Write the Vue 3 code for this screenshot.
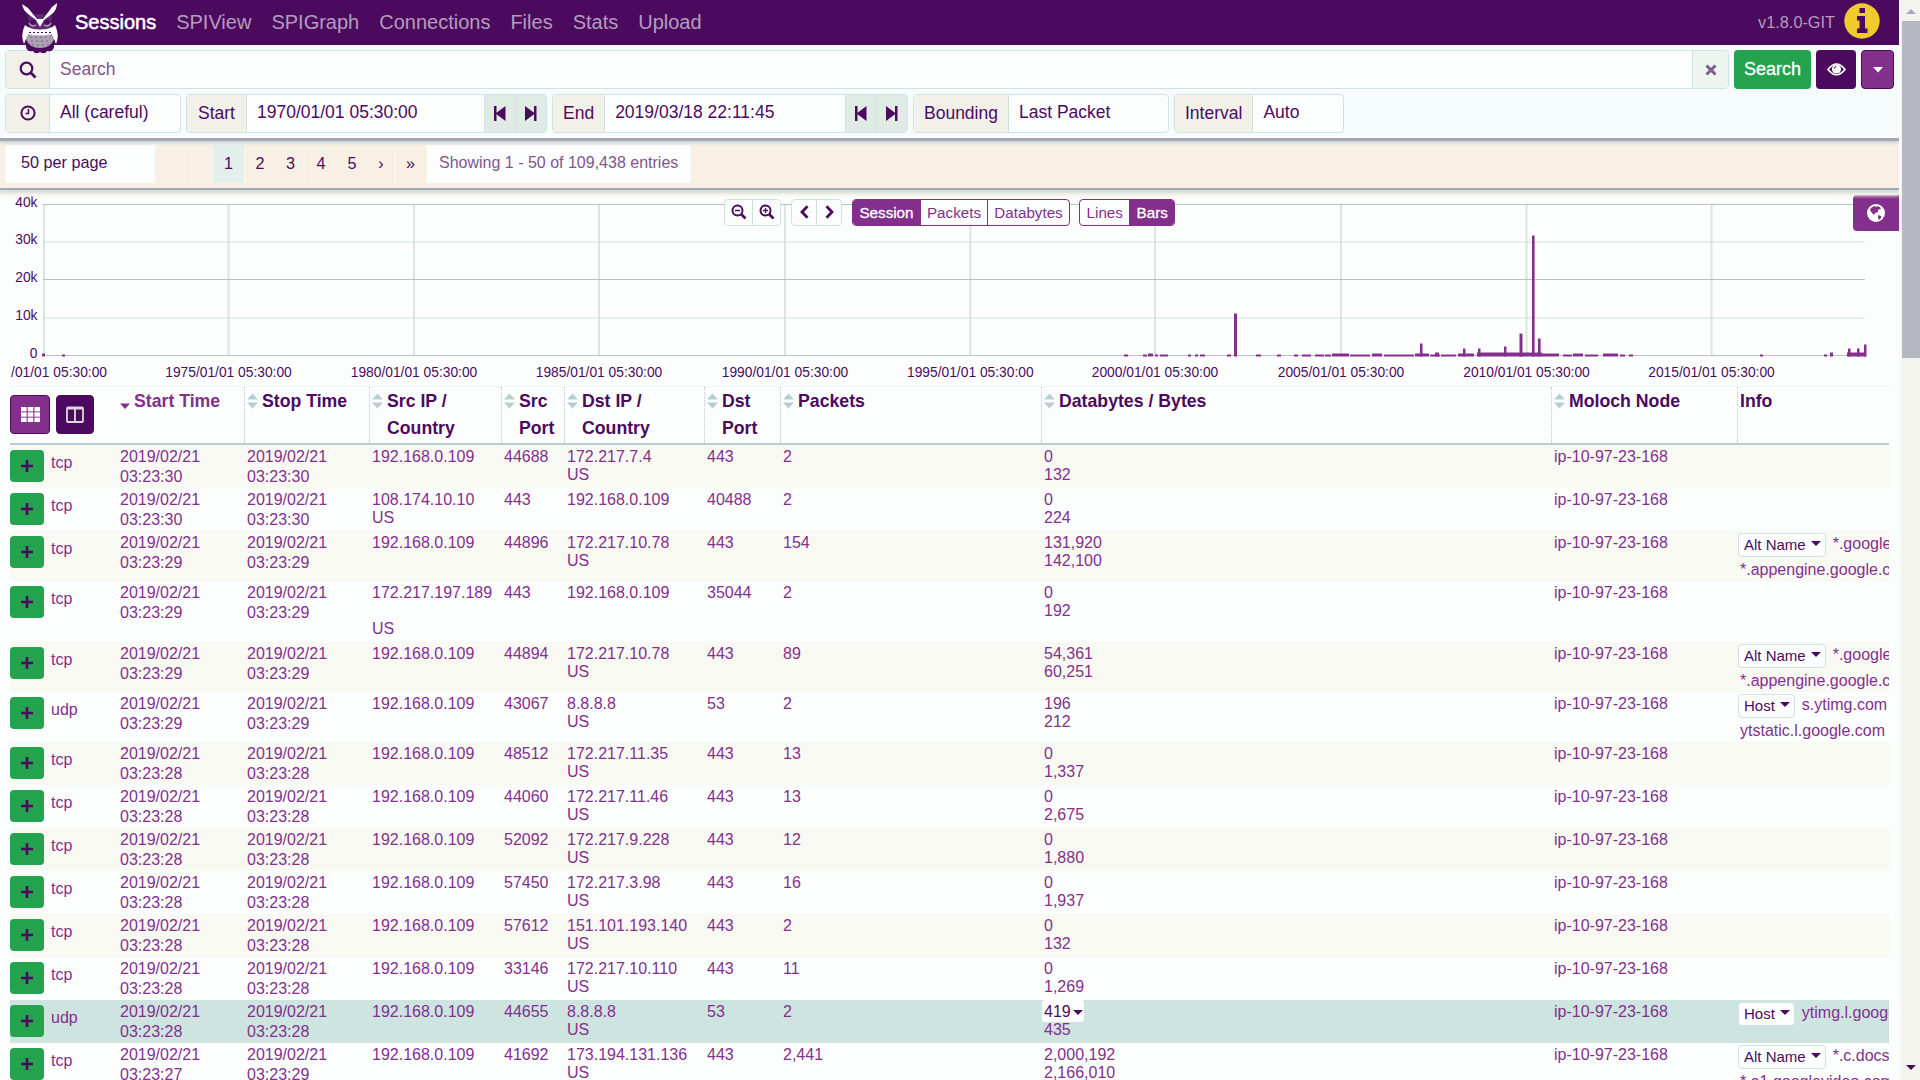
<script setup>
const nav = ['Sessions', 'SPIView', 'SPIGraph', 'Connections', 'Files', 'Stats', 'Upload']
const pages = [
  { t: '', w: 31 }, { t: '', w: 27 }, { t: '1', w: 32, on: true }, { t: '2', w: 31 }, { t: '3', w: 30 },
  { t: '4', w: 31 }, { t: '5', w: 31 }, { t: '›', w: 27 }, { t: '»', w: 32 },
]
const yTicks = [
  { t: '40k', y: 9.5 }, { t: '30k', y: 47 }, { t: '20k', y: 84.5 }, { t: '10k', y: 123 }, { t: '0', y: 160.5 },
]
const xTicks = [
  { t: '1970/01/01 05:30:00', x: 44 }, { t: '1975/01/01 05:30:00', x: 228.5 }, { t: '1980/01/01 05:30:00', x: 414 },
  { t: '1985/01/01 05:30:00', x: 599 }, { t: '1990/01/01 05:30:00', x: 785 }, { t: '1995/01/01 05:30:00', x: 970.3 },
  { t: '2000/01/01 05:30:00', x: 1155 }, { t: '2005/01/01 05:30:00', x: 1341 }, { t: '2010/01/01 05:30:00', x: 1526.5 },
  { t: '2015/01/01 05:30:00', x: 1711.5 },
]
// x, width, height of each histogram bar
const bars = [
  [42, 3, 3], [62, 3, 2], [1124, 4, 2], [1143, 4, 2], [1148, 5, 3], [1155, 3, 2], [1160, 8, 2], [1188, 3, 2], [1195, 3, 2], [1200, 5, 2], [1227, 4, 2],
  [1234, 3, 43], [1256, 5, 2], [1277, 4, 2], [1294, 4, 2], [1302, 9, 2], [1315, 9, 2], [1325, 6, 2], [1332, 17, 3], [1350, 20, 2],
  [1372, 10, 3], [1384, 30, 2], [1415, 14, 3], [1420, 2.5, 13], [1430, 10, 2], [1435, 4, 4], [1441, 15, 2], [1458, 16, 3], [1463, 2.5, 8],
  [1477, 65, 4], [1478, 2.5, 8], [1504, 2.5, 10], [1519.5, 3, 23], [1532, 2.6, 121], [1538, 2.6, 18], [1542, 17, 3], [1563, 9, 2],
  [1573, 10, 3], [1585, 13, 2], [1603, 15, 3], [1620, 5, 2], [1629, 4, 2], [1760, 3, 2], [1824, 3, 2], [1830, 3, 4],
  [1847, 19, 4], [1848, 2.5, 8], [1857, 2.5, 8], [1864, 2.5, 12],
]
const cols = [
  { t: ['Start Time'], sorted: true }, { t: ['Stop Time'] }, { t: ['Src IP /', 'Country'] }, { t: ['Src', 'Port'] },
  { t: ['Dst IP /', 'Country'] }, { t: ['Dst', 'Port'] }, { t: ['Packets'] }, { t: ['Databytes / Bytes'] },
  { t: ['Moloch Node'] }, { t: ['Info'], plain: true },
]
const rows = [
  { h: 43, p: 'tcp', a: '03:23:30', b: '03:23:30', s: '192.168.0.109', sp: '44688', d: '172.217.7.4', dc: 'US', dp: '443', k: '2', x: '0', y: '132' },
  { h: 43, p: 'tcp', a: '03:23:30', b: '03:23:30', s: '108.174.10.10', sc: 'US', sp: '443', d: '192.168.0.109', dp: '40488', k: '2', x: '0', y: '224' },
  { h: 50, p: 'tcp', a: '03:23:29', b: '03:23:29', s: '192.168.0.109', sp: '44896', d: '172.217.10.78', dc: 'US', dp: '443', k: '154', x: '131,920', y: '142,100', i: ['Alt Name', '*.google', '*.appengine.google.com'] },
  { h: 61, p: 'tcp', a: '03:23:29', b: '03:23:29', s: '172.217.197.189', sc: 'US', wrap: true, sp: '443', d: '192.168.0.109', dp: '35044', k: '2', x: '0', y: '192' },
  { h: 50, p: 'tcp', a: '03:23:29', b: '03:23:29', s: '192.168.0.109', sp: '44894', d: '172.217.10.78', dc: 'US', dp: '443', k: '89', x: '54,361', y: '60,251', i: ['Alt Name', '*.google', '*.appengine.google.com'] },
  { h: 50, p: 'udp', a: '03:23:29', b: '03:23:29', s: '192.168.0.109', sp: '43067', d: '8.8.8.8', dc: 'US', dp: '53', k: '2', x: '196', y: '212', i: ['Host', 's.ytimg.com', 'ytstatic.l.google.com'] },
  { h: 43, p: 'tcp', a: '03:23:28', b: '03:23:28', s: '192.168.0.109', sp: '48512', d: '172.217.11.35', dc: 'US', dp: '443', k: '13', x: '0', y: '1,337' },
  { h: 43, p: 'tcp', a: '03:23:28', b: '03:23:28', s: '192.168.0.109', sp: '44060', d: '172.217.11.46', dc: 'US', dp: '443', k: '13', x: '0', y: '2,675' },
  { h: 43, p: 'tcp', a: '03:23:28', b: '03:23:28', s: '192.168.0.109', sp: '52092', d: '172.217.9.228', dc: 'US', dp: '443', k: '12', x: '0', y: '1,880' },
  { h: 43, p: 'tcp', a: '03:23:28', b: '03:23:28', s: '192.168.0.109', sp: '57450', d: '172.217.3.98', dc: 'US', dp: '443', k: '16', x: '0', y: '1,937' },
  { h: 43, p: 'tcp', a: '03:23:28', b: '03:23:28', s: '192.168.0.109', sp: '57612', d: '151.101.193.140', dc: 'US', dp: '443', k: '2', x: '0', y: '132' },
  { h: 43, p: 'tcp', a: '03:23:28', b: '03:23:28', s: '192.168.0.109', sp: '33146', d: '172.217.10.110', dc: 'US', dp: '443', k: '11', x: '0', y: '1,269' },
  { h: 43, p: 'udp', hover: true, a: '03:23:28', b: '03:23:28', s: '192.168.0.109', sp: '44655', d: '8.8.8.8', dc: 'US', dp: '53', k: '2', x: '419', y: '435', i: ['Host', 'ytimg.l.google.com', ''] },
  { h: 50, plain: true, p: 'tcp', a: '03:23:27', b: '03:23:29', s: '192.168.0.109', sp: '41692', d: '173.194.131.136', dc: 'US', dp: '443', k: '2,441', x: '2,000,192', y: '2,166,010', i: ['Alt Name', '*.c.docs', '*.a1.googlevideo.com'] },
]
</script>

<template>
  <div class="app">
    <div class="main">
      <nav class="navbar">
        <svg class="owl" width="38" height="52" viewBox="0 0 38 52">
          <path d="M5 40 Q4 50 12 48 Q14 52 19 49 Q24 52 26 48 Q34 50 33 40Z" fill="#4c0a5f" />
          <path d="M5 24 L33 24 L33 36 Q30 45 19 45 Q8 45 5 36Z" fill="#ada0b3" />
          <path d="M7 13 Q19 9 31 13 L29 25 Q19 29 9 25Z" fill="#5f2a70" />
          <path d="M1 1 Q2 7 7 11 L15 17 19 24 23 17 31 11 Q36 7 36 0 L31 4 22 16 16 16 7 5Z" fill="#fcfefe" />
          <circle cx="12" cy="19" r="2.500" fill="#4c0a5f" /><circle cx="26" cy="19" r="2.500" fill="#4c0a5f" />
          <path d="M8 20a4.500 4.500 0 0 0 7 2M30 20a4.500 4.500 0 0 1-7 2" fill="none" stroke="#ada0b3" stroke-width="1.400" />
          <path d="M4 22 Q-1 32 3 41 L7 31 Q19 34 31 31 L35 41 Q39 32 34 22 L30 25 Q19 28 8 25Z" fill="#fcfefe" />
          <path d="M8 29.500 H31" stroke="#4c0a5f" stroke-width="1" stroke-dasharray="2 2" />
          <path d="M9 34 H30 M10 38 H29 M11 42 H28" stroke="#7d6290" stroke-width="1" stroke-dasharray="2 3" />
        </svg>
        <a v-for="(n, i) in nav" :key="n" :class="{ active: i === 0 }">{{ n }}</a>
        <span class="version">v1.8.0-GIT</span>
        <svg class="info-icon" width="36" height="36" viewBox="0 0 36 36">
          <circle cx="18" cy="18" r="17.7" fill="#f0cb2e" />
          <path d="M15.500 5h5.500v5h-5.500zM13 13h8v12.500h2.500v4.500H13v-4.500h2.500V17.500H13z" fill="#4c0a5f" />
        </svg>
      </nav>

      <section class="search-bar">
        <div class="line">
          <div class="group grow">
            <span class="addon icon">
              <svg width="18" height="18" viewBox="0 0 18 18" fill="none" stroke="#4c0a5f" stroke-width="2.200"><circle cx="7.500" cy="7.500" r="5.800" /><path d="M11.500 11.500l5 5" stroke-width="2.800" /></svg>
            </span>
            <span class="field placeholder">Search</span>
            <span class="addon clear">
              <svg width="12" height="12" viewBox="0 0 12 12" stroke="#776185" stroke-width="3"><path d="M1.500 1.500l9 9M10.500 1.500l-9 9" /></svg>
            </span>
          </div>
          <button class="btn green">Search</button>
          <button class="btn dark">
            <svg width="19" height="13" viewBox="0 0 19 13"><path d="M1 6.500Q9.500-4.500 18 6.500Q9.500 17 1 6.500z" fill="none" stroke="#fff" stroke-width="1.700" /><circle cx="9.500" cy="6" r="4.600" fill="#fff" /><path d="M7.200 5.800a2.400 2.400 0 0 1 2.200-2.400" fill="none" stroke="#4c0a5f" /></svg>
          </button>
          <button class="btn purple">
            <svg width="10" height="6" viewBox="0 0 10 6"><path d="M0 0h10L5 5.600z" fill="#fff" /></svg>
          </button>
        </div>
        <div class="line second">
          <div class="group g-range">
            <span class="addon icon">
              <svg width="16" height="16" viewBox="0 0 16 16" fill="none" stroke="#4c0a5f" stroke-width="2"><circle cx="8" cy="8" r="6.600" /><path d="M8.500 4v4.500H5.500" stroke-width="1.500" /></svg>
            </span>
            <span class="field">All (careful)</span>
          </div>
          <div v-for="g in [['Start', '1970/01/01 05:30:00', 'g-start'], ['End', '2019/03/18 22:11:45', 'g-end']]" :key="g[0]" class="group" :class="g[2]">
            <span class="addon">{{ g[0] }}</span>
            <span class="field">{{ g[1] }}</span>
            <span class="addon step"><svg width="12" height="15" viewBox="0 0 12 15" fill="#4c0a5f"><path d="M0 0h2.500v6.800L11.500 0v15L2.500 8.200V15H0z" /></svg></span>
            <span class="addon step"><svg width="12" height="15" viewBox="0 0 12 15" fill="#4c0a5f"><path d="M11.500 0H9v6.800L0 0v15l9-6.800V15h2.500z" /></svg></span>
          </div>
          <div class="group g-bound"><span class="addon">Bounding</span><span class="field">Last Packet</span></div>
          <div class="group g-int"><span class="addon">Interval</span><span class="field">Auto</span></div>
        </div>
      </section>

      <section class="paging">
        <span class="per-page">50 per page</span>
        <span v-for="(p, i) in pages" :key="i" class="page" :class="{ on: p.on }" :style="{ width: p.w + 'px' }">{{ p.t }}</span>
        <span class="showing">Showing 1 - 50 of 109,438 entries</span>
      </section>

      <section class="chart">
        <svg width="1899" height="191" viewBox="0 0 1899 191">
          <line v-for="t in xTicks" :key="t.x" :x1="t.x" :x2="t.x" y1="9" y2="161" stroke="#dbe6dc" stroke-width="2" />
          <line v-for="(t, i) in yTicks" :key="t.y" x1="43" x2="1865" :y1="t.y" :y2="t.y" :stroke="i % 2 ? '#cde4e1' : '#bfbcc8'" stroke-width="1" />
          <rect v-for="(b, i) in bars" :key="i" :x="b[0]" :y="161.500 - b[2]" :width="b[1]" :height="b[2]" fill="#83308c" />
          <text v-for="t in yTicks" :key="t.t" x="37.500" :y="t.y + 2.300" text-anchor="end">{{ t.t }}</text>
          <text v-for="(t, i) in xTicks" :key="t.t" :x="i ? t.x : 107" y="181.500" :text-anchor="i ? 'middle' : 'end'">{{ i ? t.t : '/01/01 05:30:00' }}</text>
        </svg>
        <div class="tools">
          <div class="tool-group light">
            <span style="width: 27px"><svg width="16" height="16" viewBox="0 0 16 16" fill="none" stroke="#4c0a5f" stroke-width="2"><circle cx="6.500" cy="6.500" r="5" /><path d="M10 10l4.500 4.500" stroke-width="2.600" /><path d="M4 6.500h5" stroke-width="1.300" /></svg></span>
            <span style="width: 28px"><svg width="16" height="16" viewBox="0 0 16 16" fill="none" stroke="#4c0a5f" stroke-width="2"><circle cx="6.500" cy="6.500" r="5" /><path d="M10 10l4.500 4.500" stroke-width="2.600" /><path d="M4 6.500h5M6.500 4v5" stroke-width="1.300" /></svg></span>
          </div>
          <div class="tool-group light arrows">
            <span style="width: 24px"><svg width="9" height="14" viewBox="0 0 9 14" fill="none" stroke="#4c0a5f" stroke-width="2.800"><path d="M7.500 1.200L2 7l5.500 5.800" /></svg></span>
            <span style="width: 25px"><svg width="9" height="14" viewBox="0 0 9 14" fill="none" stroke="#4c0a5f" stroke-width="2.800"><path d="M1.500 1.200L7 7l-5.500 5.800" /></svg></span>
          </div>
          <div class="tool-group solid kinds"><span class="on" style="width: 67px">Session</span><span style="width: 67px">Packets</span><span style="width: 82px">Databytes</span></div>
          <div class="tool-group solid styles"><span style="width: 50px">Lines</span><span class="on" style="width: 45px">Bars</span></div>
        </div>
        <div class="globe">
          <svg width="18" height="18" viewBox="0 0 18 18"><circle cx="9" cy="9" r="9" fill="#fff" /><path d="M4 4l3-2 3 1 2 0 1 2-2 1 0 2-3 1-1 2-2-2-2-3zM10 2l3 1 1 2-3 0zM11 11l3 1 0 2-2 2-1-2z" fill="#83308c" /></svg>
        </div>
      </section>

      <section class="table">
        <div class="thead grid">
          <div class="head-buttons">
            <span class="hb light"><svg width="19" height="15" viewBox="0 0 19 15" fill="#fff"><template v-for="r in 3" :key="r"><rect v-for="c in 3" :key="c" :x="(c - 1) * 6.700" :y="(r - 1) * 5.300" width="5.600" height="4.400" /></template></svg></span>
            <span class="hb"><svg width="18" height="17" viewBox="0 0 18 17" fill="none" stroke="#dcd9e2" stroke-width="1.800"><rect x="1" y="1.500" width="16" height="14.500" rx="1" /><path d="M9 2v14M1 2.500h16" /></svg></span>
          </div>
          <div v-for="c in cols" :key="c.t[0]" class="th" :class="{ sorted: c.sorted, plain: c.plain }">
            <svg v-if="c.sorted" class="sort" width="10" height="18" viewBox="0 0 10 18"><path d="M0 10.500h10L5 16z" fill="#83308c" /></svg>
            <svg v-else-if="!c.plain" class="sort" width="11" height="18" viewBox="0 0 11 18" fill="#b9cdcf"><path d="M0 7.500h11L5.500 1.500zM0 10.500h11L5.500 16.500z" /></svg>
            <span><template v-for="l in c.t" :key="l">{{ l }}<br></template></span>
          </div>
        </div>
        <div v-for="(r, i) in rows" :key="i" class="row grid" :class="{ odd: i % 2 === 0, hover: r.hover }" :style="{ height: r.h + 'px' }">
          <div class="first"><span class="plus"><svg width="12" height="12" viewBox="0 0 12 12"><path d="M6 0v12M0 6h12" stroke="#4c0a5f" stroke-width="2.600" /></svg></span><span class="proto">{{ r.p }}</span></div>
          <div class="date">2019/02/21<br>{{ r.a }}</div>
          <div class="date">2019/02/21<br>{{ r.b }}</div>
          <div>{{ r.s }}<br><br v-if="r.wrap">{{ r.sc }}</div>
          <div>{{ r.sp }}</div>
          <div>{{ r.d }}<br>{{ r.dc }}</div>
          <div>{{ r.dp }}</div>
          <div>{{ r.k }}</div>
          <div><span v-if="r.hover" class="value-menu">{{ r.x }}<i class="caret"></i></span><template v-else>{{ r.x }}</template><br>{{ r.y }}</div>
          <div>ip-10-97-23-168</div>
          <div class="info">
            <template v-if="r.i">
              <div class="info-line"><span class="tag">{{ r.i[0] }}<i class="caret"></i></span>{{ r.i[1] }}</div>
              <div class="info-second">{{ r.i[2] }}</div>
            </template>
          </div>
        </div>
      </section>
    </div>

    <aside class="scrollbar">
      <i class="up"></i>
      <div class="thumb"></div>
      <i class="down"></i>
    </aside>
  </div>
</template>

<style>
body { margin: 0; overflow: hidden; }
</style>

<style scoped>
* { box-sizing: border-box; }
.app { display: flex; width: 1920px; height: 1080px; overflow: hidden; background: #fcfefe; font-family: "Liberation Sans", Arial, sans-serif; color: #4c0a5f; }
.main { width: 1899px; height: 1080px; overflow: hidden; }
svg { display: block; flex: none; }

.navbar { display: flex; align-items: center; height: 45px; padding-left: 22px; background: #4c0a5f; position: relative; z-index: 5; font-size: 20px; color: #b29dbd; }
.owl { align-self: flex-start; margin: 3px 16px 0 -1px; }
.navbar a { margin-right: 20px; line-height: 47px; }
.navbar a.active { color: #fff; -webkit-text-stroke: 0.5px #fff; }
.version { margin-left: auto; font-size: 16.300px; }
.info-icon { margin: -4px 19px 0 9px; }

.search-bar { height: 93px; padding: 5px 5px 0; background: #f6fcfb; position: relative; z-index: 4; box-shadow: 0 3px 0 #ada3b5, 0 5px 3px #bcd5d5; font-size: 17.500px; }
.line { display: flex; height: 39px; }
.line.second { margin-top: 5px; }
.line.second .field, .line.second .addon { line-height: 35px; padding-bottom: 1px; }
.group { display: flex; height: 39px; border: 1px solid #cde4e1; border-radius: 4px; overflow: hidden; background: #fcfefe; margin-right: 6px; }
.grow { flex: 1; margin-right: 5px; }
.addon { display: flex; align-items: center; justify-content: center; padding: 0 10px; background: #f1f1ea; border-right: 1px solid #cde4e1; }
.addon.icon { width: 44px; padding: 0; }
.field { flex: 1; padding-left: 10px; line-height: 36px; white-space: nowrap; }
.placeholder { color: #83558f; }
.addon.clear { width: 36px; padding: 0; border-right: 0; border-left: 1px solid #cde4e1; background: #eef5f1; }
.addon.step { width: 31px; padding: 0; border-right: 0; border-left: 1px solid #cde4e1; background: #e1ebe6; }
.g-range { width: 176px; margin-right: 5px; }
.g-start { width: 361px; margin-right: 5px; }
.g-start > .addon:first-child { width: 60px; }
.g-end { width: 356px; margin-right: 5px; }
.g-bound { width: 256px; margin-right: 5px; }
.g-int { width: 170px; }
.btn { display: flex; align-items: center; justify-content: center; height: 39px; padding: 0; border: 0; border-radius: 4px; font: 18px "Liberation Sans", Arial, sans-serif; color: #fff; }
.btn.green { width: 77px; background: #24a34f; -webkit-text-stroke: 0.300px #fff; }
.btn.dark { width: 40px; margin-left: 5px; background: #4c0a5f; }
.btn.purple { width: 33px; margin-left: 5px; background: #83308c; border: 1px solid #4c0a5f; }

.paging { display: flex; height: 50px; padding: 7px 5px 0; background: #f8f0e4; position: relative; z-index: 3; box-shadow: 0 2px 0 #ada3b5, 0 5px 2px #cde4e1, 0 8px 3px #f8f0e4; font-size: 16.200px; }
.per-page { width: 150px; height: 38px; padding-left: 16px; line-height: 35px; background: #fcfefe; border-radius: 4px 0 0 4px; }
.page { height: 38px; line-height: 36px; text-align: center; border-right: 1px solid #faf5ec; }
.page.on { background: #e3efeb; }
.showing { width: 264px; height: 38px; line-height: 36px; padding-left: 12px; background: #fcfefe; border-radius: 0 4px 4px 0; color: #83558f; font-size: 16px; white-space: nowrap; }

.chart { position: relative; height: 198px; padding-top: 7px; }
.chart text { font-size: 13.800px; fill: #4c0a5f; }
.tools { position: absolute; left: 724px; top: 11px; display: flex; }
.tool-group { display: flex; height: 27px; border-radius: 4px; overflow: hidden; background: #fcfefe; }
.tool-group span { display: flex; align-items: center; justify-content: center; }
.tool-group.light { border: 1px solid #cde4e1; }
.tool-group.light span { padding-bottom: 2px; }
.tool-group.light span + span { border-left: 1px solid #cde4e1; }
.arrows { margin-left: 10px; }
.solid { border: 1px solid #83308c; font-size: 15.200px; color: #83308c; }
.solid span + span { border-left: 1px solid #83308c; }
.solid .on { background: #83308c; color: #fff; -webkit-text-stroke: 0.300px #fff; }
.kinds { width: 218px; margin-left: 10px; }
.styles { width: 96px; margin-left: 9px; }
.globe { position: absolute; right: 0; top: 7px; width: 46px; height: 36px; display: flex; align-items: center; justify-content: center; background: #83308c; border-radius: 4px 0 0 4px; }

.table { width: 1879px; margin-left: 10px; }
.grid { display: grid; grid-template-columns: 108px 127px 125px 132px 63px 140px 76px 261px 510px 186px 151px; }
.thead { height: 59px; border-top: 1px dotted #e2eeec; border-bottom: 2px solid #b9cdcf; font-size: 17.700px; font-weight: bold; line-height: 27px; }
.head-buttons { display: flex; gap: 6px; padding-top: 8px; }
.hb { display: flex; align-items: center; justify-content: center; width: 38px; height: 39px; border-radius: 4px; background: #4c0a5f; border: 1px solid #4c0a5f; }
.hb.light { width: 40px; background: #83308c; }
.th { display: flex; padding-left: 2px; border-right: 1px dotted #b9cdcf; white-space: nowrap; }
.th > span { padding-top: 1px; height: 55px; }
.th.plain { border-right: 0; }
.sort { margin: 5px 4px 0 0; }
.sorted .sort { margin-top: 6px; }
.sorted { color: #83308c; }
.row { font-size: 16px; line-height: 18px; color: #83308c; overflow: hidden; }
.row > div { padding: 3px 0 0 2px; white-space: nowrap; min-width: 0; }
.row.odd { background: #f9f9f4; }
.row.hover { background: #cde4e1; }
.row > .date { line-height: 20px; padding-top: 2px; }
.row > .first { display: flex; padding: 5px 0 0; }
.plus { display: flex; align-items: center; justify-content: center; width: 34px; height: 32px; border-radius: 4px; background: #24a34f; }
.proto { margin: 4px 0 0 7px; }
.caret { display: inline-block; border: 5px solid transparent; border-top-color: #4c0a5f; border-bottom: 0; }
.row > .info { padding: 2px 0 0; overflow: hidden; }
.info-line { display: flex; line-height: 22px; }
.tag { height: 24px; margin-right: 7px; padding: 0 4px 0 5px; line-height: 22px; font-size: 15px; color: #4c0a5f; background: #fcfefe; border: 1px solid #cde4e1; border-radius: 4px; }
.tag .caret { margin: 0 0 4px 5px; }
.info-second { margin-top: 4px; padding-left: 2px; }
.value-menu { display: inline-block; height: 22px; margin: -3px 0 -1px -2px; padding: 3px 1px 0 2px; line-height: 18px; color: #4c0a5f; background: #fcfefe; border-radius: 3px; vertical-align: top; }
.value-menu .caret { margin: 0 0 2px 2px; }

.scrollbar { display: flex; flex-direction: column; align-items: center; width: 21px; height: 1080px; padding: 9px 0 10px; background: #f4f4ee; border-left: 2px solid #fcfefe; }
.up { border: 5px solid transparent; border-top: 0; border-bottom-color: #ada3b5; }
.thumb { width: 18px; height: 337px; margin-top: 7px; background: #b7b7c3; }
.down { margin-top: auto; border: 5px solid transparent; border-bottom: 0; border-top-color: #4c0a5f; }
</style>
